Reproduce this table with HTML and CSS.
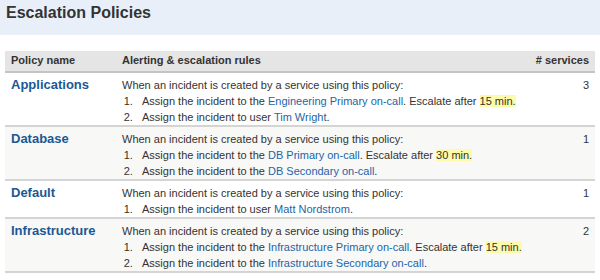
FILE: index.html
```html
<!DOCTYPE html>
<html lang="en">
<head>
    <meta charset="UTF-8">
    <title>Escalation Policies</title>
    <link rel="stylesheet" href="styles.css">
</head>
<body>

    <div class="page-header">
        <h1>Escalation Policies</h1>
    </div>

    <table class="policies">
        <thead>
            <tr>
                <th class="name-col">Policy name</th>
                <th>Alerting &amp; escalation rules</th>
                <th class="count-col"># services</th>
            </tr>
        </thead>
        <tbody>
            <tr>
                <td class="name-col"><a href="#" class="policy-name">Applications</a></td>
                <td>
                    When an incident is created by a service using this policy:
                    <ol>
                        <li>Assign the incident to the <a href="#">Engineering Primary on-call</a>. Escalate after <span class="delay">15 min.</span></li>
                        <li>Assign the incident to user <a href="#">Tim Wright</a>.</li>
                    </ol>
                </td>
                <td class="count-col">3</td>
            </tr>
            <tr>
                <td class="name-col"><a href="#" class="policy-name">Database</a></td>
                <td>
                    When an incident is created by a service using this policy:
                    <ol>
                        <li>Assign the incident to the <a href="#">DB Primary on-call</a>. Escalate after <span class="delay">30 min.</span></li>
                        <li>Assign the incident to the <a href="#">DB Secondary on-call</a>.</li>
                    </ol>
                </td>
                <td class="count-col">1</td>
            </tr>
            <tr>
                <td class="name-col"><a href="#" class="policy-name">Default</a></td>
                <td>
                    When an incident is created by a service using this policy:
                    <ol>
                        <li>Assign the incident to user <a href="#">Matt Nordstrom</a>.</li>
                    </ol>
                </td>
                <td class="count-col">1</td>
            </tr>
            <tr>
                <td class="name-col"><a href="#" class="policy-name">Infrastructure</a></td>
                <td>
                    When an incident is created by a service using this policy:
                    <ol>
                        <li>Assign the incident to the <a href="#">Infrastructure Primary on-call</a>. Escalate after <span class="delay">15 min.</span></li>
                        <li>Assign the incident to the <a href="#">Infrastructure Secondary on-call</a>.</li>
                    </ol>
                </td>
                <td class="count-col">2</td>
            </tr>
        </tbody>
    </table>

</body>
</html>
```

FILE: styles.css
```css
/* General Styles */
body {
    font-family: "Liberation Sans", Arial, sans-serif;
    font-size: 11px;
    color: #333;
    margin: 0;
    padding: 0;
    background-color: #fff;
}

a {
    color: #2364a8;
    text-decoration: none;
}

.page-header {
    background-color: #e9eff9;
    height: 35px;
    padding: 0 6px;
    margin-bottom: 16px;
}

.page-header h1 {
    margin: 0;
    font-size: 16px;
    line-height: 26px;
    color: #333;
}

/* Policies table */
.policies {
    width: 590px;
    margin-left: 5px;
    border-collapse: collapse;
}

.policies th {
    background-color: #e5e5e5;
    text-align: left;
    font-weight: bold;
    padding: 3px 6px 4px;
    line-height: 13px;
    border-bottom: 2px solid #c4c4c4;
}

.policies td {
    vertical-align: top;
    padding: 4px 6px 0;
    line-height: 16px;
    border-bottom: 2px solid #d4d4d4;
}

.policies tbody tr:nth-child(even) td {
    background-color: #f8f8f7;
}

.policies .name-col {
    width: 99px;
}

.policies .count-col {
    text-align: right;
    white-space: nowrap;
    width: 50px;
}

.policy-name {
    font-size: 13px;
    font-weight: bold;
    color: #1b5896;
}

.policies ol {
    margin: 0;
    padding-left: 20px;
}

.policies li {
    white-space: nowrap;
}

.policies li::marker {
    content: counter(list-item) ".   ";
}

.delay {
    background-color: #fdfbaa;
}
```
